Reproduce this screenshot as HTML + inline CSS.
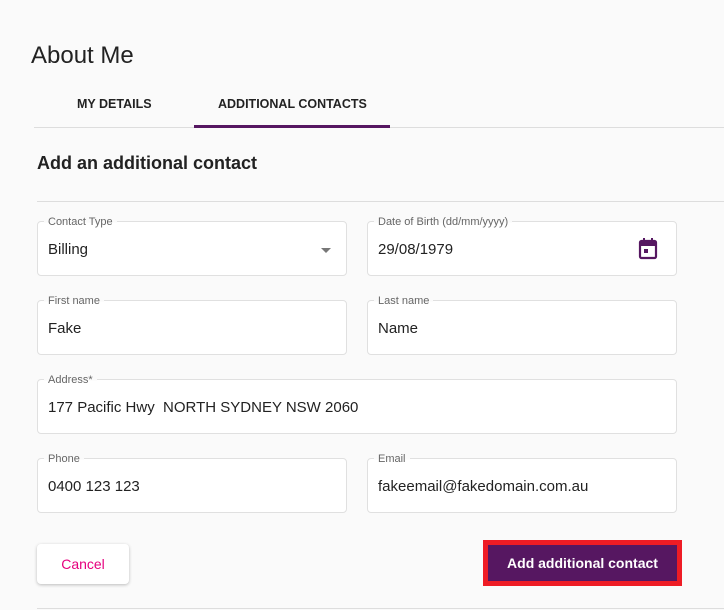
<!DOCTYPE html>
<html><head><style>
*{margin:0;padding:0;box-sizing:border-box}
body{width:724px;height:610px;background:#fafafa;font-family:"Liberation Sans",Arial,sans-serif;color:#222;position:relative;overflow:hidden}
.a{position:absolute}
.f{position:absolute;border:1px solid #e0e0e0;border-radius:4px;background:#fff;height:55px}
.f label{position:absolute;top:-5px;left:6px;line-height:11px;background:linear-gradient(#fafafa 50%,#fff 50%);padding:0 4px;font-size:11px;color:#666}
.f span{position:absolute;left:10px;top:19px;font-size:15px;color:#222}
</style></head><body>
<div class="a" style="left:31px;top:42px;font-size:24px;color:#222">About Me</div>
<div class="a" style="left:77px;top:97px;font-size:12.5px;font-weight:bold">MY DETAILS</div>
<div class="a" style="left:218px;top:97px;font-size:12.5px;font-weight:bold">ADDITIONAL CONTACTS</div>
<div class="a" style="left:34px;top:127px;width:690px;height:1px;background:#ddd"></div>
<div class="a" style="left:194px;top:125px;width:196px;height:3px;background:#561761"></div>
<div class="a" style="left:37px;top:153px;font-size:18px;font-weight:bold">Add an additional contact</div>
<div class="a" style="left:37px;top:201px;width:687px;height:1px;background:#ddd"></div>

<div class="f" style="left:37px;top:221px;width:310px"><label>Contact Type</label><span>Billing</span>
<div class="a" style="left:283px;top:26px;border-left:5px solid transparent;border-right:5px solid transparent;border-top:5px solid #777"></div></div>
<div class="f" style="left:367px;top:221px;width:310px"><label>Date of Birth (dd/mm/yyyy)</label><span>29/08/1979</span>
<svg class="a" style="left:270px;top:16px" width="20" height="22" viewBox="0 0 20 22"><rect x="2" y="3" width="16" height="17" rx="1.5" fill="none" stroke="#561761" stroke-width="2.2"/><rect x="2" y="3" width="16" height="5" fill="#561761"/><rect x="5" y="0" width="2" height="4" fill="#561761"/><rect x="13" y="0" width="2" height="4" fill="#561761"/><rect x="6" y="11" width="4" height="4" fill="#561761"/></svg></div>

<div class="f" style="left:37px;top:300px;width:310px"><label>First name</label><span>Fake</span></div>
<div class="f" style="left:367px;top:300px;width:310px"><label>Last name</label><span>Name</span></div>
<div class="f" style="left:37px;top:379px;width:640px"><label>Address*</label><span>177 Pacific Hwy&nbsp; NORTH SYDNEY NSW 2060</span></div>
<div class="f" style="left:37px;top:458px;width:310px"><label>Phone</label><span>0400 123 123</span></div>
<div class="f" style="left:367px;top:458px;width:310px"><label>Email</label><span>fakeemail@fakedomain.com.au</span></div>

<div class="a" style="left:37px;top:544px;width:92px;height:40px;background:#fff;border-radius:4px;box-shadow:0 1px 3px rgba(0,0,0,.25);color:#e6007e;font-size:14px;text-align:center;line-height:40px">Cancel</div>
<div class="a" style="left:483px;top:540px;width:199px;height:46px;background:#ee1c25;padding:5px">
<div style="background:#561761;height:36px;color:#fff;font-weight:bold;font-size:14px;text-align:center;line-height:36px">Add additional contact</div></div>
<div class="a" style="left:37px;top:608px;width:687px;height:1px;background:#ddd"></div>
</body></html>
